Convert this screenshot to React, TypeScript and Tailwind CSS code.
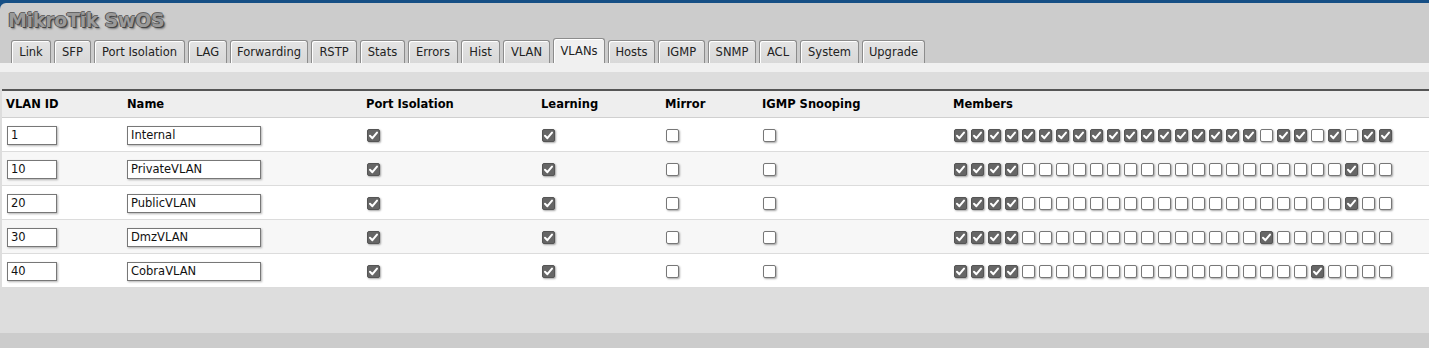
import React from 'react';

const tabs = [
  { label: 'Link', w: 'w-[40px]' },
  { label: 'SFP', w: 'w-[37px]' },
  { label: 'Port Isolation', w: 'w-[91px]' },
  { label: 'LAG', w: 'w-[39px]' },
  { label: 'Forwarding', w: 'w-[78px]' },
  { label: 'RSTP', w: 'w-[46px]' },
  { label: 'Stats', w: 'w-[45px]' },
  { label: 'Errors', w: 'w-[50px]' },
  { label: 'Hist', w: 'w-[39px]' },
  { label: 'VLAN', w: 'w-[47px]' },
  { label: 'VLANs', w: 'w-[52px]' },
  { label: 'Hosts', w: 'w-[47px]' },
  { label: 'IGMP', w: 'w-[47px]' },
  { label: 'SNMP', w: 'w-[48px]' },
  { label: 'ACL', w: 'w-[38px]' },
  { label: 'System', w: 'w-[59px]' },
  { label: 'Upgrade', w: 'w-[63px]' },
];

// member port numbers (1-based) that are checked
const range = (a: number, b: number) =>
  Array.from({ length: b - a + 1 }, (_, i) => a + i);

const vlans = [
  {
    id: '1',
    name: 'Internal',
    members: [...range(1, 18), 20, 21, 23, 25, 26],
  },
  { id: '10', name: 'PrivateVLAN', members: [...range(1, 4), 24] },
  { id: '20', name: 'PublicVLAN', members: [...range(1, 4), 24] },
  { id: '30', name: 'DmzVLAN', members: [...range(1, 4), 19] },
  { id: '40', name: 'CobraVLAN', members: [...range(1, 4), 22] },
];

const cols =
  'grid grid-cols-[121px_239px_175px_124px_97px_191px_1fr] items-center';

function Box({ checked }: { checked: boolean }) {
  return (
    <span
      className={`flex size-[13px] shrink-0 items-center justify-center rounded-[2px] border shadow-[1px_1px_2px_rgba(0,0,0,0.35)] ${
        checked ? 'border-[#555] bg-[#666]' : 'border-[#777] bg-white'
      }`}
    >
      {checked && (
        <svg width="11" height="11" viewBox="0 0 11 11">
          <path
            d="M2 5.8 L4.4 8.2 L9 2.6"
            fill="none"
            stroke="white"
            strokeWidth="2"
            strokeLinecap="round"
            strokeLinejoin="round"
          />
        </svg>
      )}
    </span>
  );
}

function Field({ value, width }: { value: string; width: string }) {
  return (
    <div
      className={`${width} flex h-[19px] items-center border border-[#777] bg-white pl-[3px] pt-[1px] text-[11.5px] text-[#111] shadow-[1px_1px_2px_rgba(0,0,0,0.3)]`}
    >
      {value}
    </div>
  );
}

export default function App() {
  return (
    <div
      className="h-[348px] w-full overflow-hidden bg-[#164f85] pt-[3px]"
      style={{ fontFamily: '"DejaVu Sans", Verdana, sans-serif' }}
    >
      <div className="flex h-[345px] flex-col rounded-tl-[6px] bg-[#cccccc]">
        {/* Header / title */}
        <div className="h-[35px] pl-[8px] pt-[3px]">
          <span className="text-[19px] font-bold tracking-[-0.3px] text-[#9a9a9a] [text-shadow:1px_1px_0_#444,-1px_0_0_#555,0_-1px_0_#666,2px_2px_2px_#777]">
            MikroTik SwOS
          </span>
        </div>

        {/* Tabs */}
        <div className="flex h-[25px] items-end gap-[3px] pl-[11px]">
          {tabs.map((t) => {
            const active = t.label === 'VLANs';
            return (
              <div
                key={t.label}
                className={`${t.w} flex items-center justify-center rounded-t-[3px] border border-b-0 border-[#8c8c8c] pt-[1px] text-[11.5px] text-[#222] shadow-[inset_1px_1px_0_#fff] ${
                  active
                    ? 'h-[25px] bg-[#f0f0f0]'
                    : 'h-[23px] bg-linear-to-b from-[#e4e4e4] to-[#d8d8d8]'
                }`}
              >
                {t.label}
              </div>
            );
          })}
        </div>

        {/* Content panel */}
        <div className="flex h-[270px] flex-col bg-[#dddddd]">
          <div className="h-[9px] bg-[#f0f0f0]" />
          <div className="h-[17px]" />
          <div className="ml-[2px] border-t-2 border-[#555] text-[11.5px] text-[#111]">
            {/* header row */}
            <div
              className={`${cols} h-[27px] border-b border-[#d0d0d0] bg-[#eeeeee] pt-[2px] font-bold text-black`}
            >
              <div className="pl-[4px]">VLAN ID</div>
              <div className="pl-[4px]">Name</div>
              <div className="pl-[4px]">Port Isolation</div>
              <div className="pl-[4px]">Learning</div>
              <div className="pl-[4px]">Mirror</div>
              <div className="pl-[4px]">IGMP Snooping</div>
              <div className="pl-[4px]">Members</div>
            </div>

            {vlans.map((v, i) => (
              <div
                key={v.id}
                className={`${cols} h-[34px] border-b border-[#dcdcdc] pt-[1px] ${
                  i % 2 === 0 ? 'bg-white' : 'bg-[#f7f7f7]'
                }`}
              >
                <div className="pl-[5px]">
                  <Field value={v.id} width="w-[50px]" />
                </div>
                <div className="pl-[4px]">
                  <Field value={v.name} width="w-[134px]" />
                </div>
                <div className="pl-[5px]">
                  <Box checked />
                </div>
                <div className="pl-[5px]">
                  <Box checked />
                </div>
                <div className="pl-[5px]">
                  <Box checked={false} />
                </div>
                <div className="pl-[5px]">
                  <Box checked={false} />
                </div>
                <div className="flex gap-[4px] pl-[5px]">
                  {range(1, 26).map((p) => (
                    <Box key={p} checked={v.members.includes(p)} />
                  ))}
                </div>
              </div>
            ))}
          </div>
        </div>
      </div>
    </div>
  );
}
